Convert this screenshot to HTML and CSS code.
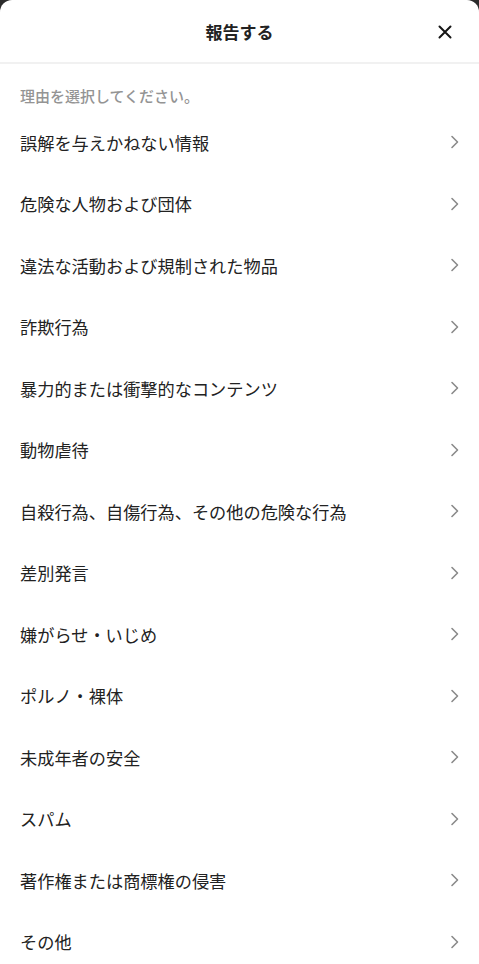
FILE: index.html
```html
<!DOCTYPE html>
<html lang="ja">
<head>
<meta charset="utf-8">
<link rel="stylesheet" href="styles.css">
</head>
<body>
<div class="sheet">
  <header class="header">
    <h1 class="title">報告する</h1>
    <button class="close" aria-label="閉じる">
      <svg width="14" height="14" viewBox="0 0 14 14"><path d="M1.5 1.5L12.5 12.5M12.5 1.5L1.5 12.5" stroke="#161616" stroke-width="2" stroke-linecap="round"/></svg>
    </button>
  </header>
  <p class="subtitle">理由を選択してください。</p>
  <ul class="list">
    <li class="row"><span>誤解を与えかねない情報</span><svg class="chev" viewBox="0 0 10 14"><path d="M2 1.5L7.5 7L2 12.5" /></svg></li>
    <li class="row"><span>危険な人物および団体</span><svg class="chev" viewBox="0 0 10 14"><path d="M2 1.5L7.5 7L2 12.5" /></svg></li>
    <li class="row"><span>違法な活動および規制された物品</span><svg class="chev" viewBox="0 0 10 14"><path d="M2 1.5L7.5 7L2 12.5" /></svg></li>
    <li class="row"><span>詐欺行為</span><svg class="chev" viewBox="0 0 10 14"><path d="M2 1.5L7.5 7L2 12.5" /></svg></li>
    <li class="row"><span>暴力的または衝撃的なコンテンツ</span><svg class="chev" viewBox="0 0 10 14"><path d="M2 1.5L7.5 7L2 12.5" /></svg></li>
    <li class="row"><span>動物虐待</span><svg class="chev" viewBox="0 0 10 14"><path d="M2 1.5L7.5 7L2 12.5" /></svg></li>
    <li class="row"><span>自殺行為、自傷行為、その他の危険な行為</span><svg class="chev" viewBox="0 0 10 14"><path d="M2 1.5L7.5 7L2 12.5" /></svg></li>
    <li class="row"><span>差別発言</span><svg class="chev" viewBox="0 0 10 14"><path d="M2 1.5L7.5 7L2 12.5" /></svg></li>
    <li class="row"><span>嫌がらせ・いじめ</span><svg class="chev" viewBox="0 0 10 14"><path d="M2 1.5L7.5 7L2 12.5" /></svg></li>
    <li class="row"><span>ポルノ・裸体</span><svg class="chev" viewBox="0 0 10 14"><path d="M2 1.5L7.5 7L2 12.5" /></svg></li>
    <li class="row"><span>未成年者の安全</span><svg class="chev" viewBox="0 0 10 14"><path d="M2 1.5L7.5 7L2 12.5" /></svg></li>
    <li class="row"><span>スパム</span><svg class="chev" viewBox="0 0 10 14"><path d="M2 1.5L7.5 7L2 12.5" /></svg></li>
    <li class="row"><span>著作権または商標権の侵害</span><svg class="chev" viewBox="0 0 10 14"><path d="M2 1.5L7.5 7L2 12.5" /></svg></li>
    <li class="row"><span>その他</span><svg class="chev" viewBox="0 0 10 14"><path d="M2 1.5L7.5 7L2 12.5" /></svg></li>
  </ul>
</div>
</body>
</html>
```

FILE: styles.css
```css
* { box-sizing: border-box; }
html, body {
  margin: 0;
  padding: 0;
  background: #2b2b2b;
  height: 100%;
  overflow: hidden;
}
body {
  font-family: "Noto Sans CJK JP", "Noto Sans", sans-serif;
  color: #222;
}
.sheet {
  background: #fff;
  border-radius: 12px 12px 0 0;
  min-height: 964px;
}
.header {
  height: 64px;
  display: flex;
  align-items: center;
  justify-content: center;
  position: relative;
  border-bottom: 2px solid #f1f1f1;
}
.title {
  margin: 0;
  font-size: 17px;
  font-weight: 700;
  color: #222;
  line-height: 1;
}
.close {
  position: absolute;
  right: 26px;
  top: 24px;
  width: 16px;
  height: 16px;
  padding: 0;
  border: 0;
  background: none;
  display: flex;
  align-items: center;
  justify-content: center;
}
.subtitle {
  margin: 0;
  padding: 21.5px 20px 6px;
  font-size: 15px;
  line-height: 20px;
  font-weight: 500;
  color: #949494;
  height: 47.5px;
}
.list {
  list-style: none;
  margin: 0;
  padding: 0;
}
.row {
  height: 61.5px;
  display: flex;
  align-items: center;
  justify-content: space-between;
  padding: 0 19px 0 20px;
  font-size: 17.2px;
  color: #222;
}
.chev {
  width: 10px;
  height: 14px;
  fill: none;
  stroke: #8a8a8a;
  stroke-width: 1.6;
  stroke-linecap: round;
  stroke-linejoin: round;
}
```
